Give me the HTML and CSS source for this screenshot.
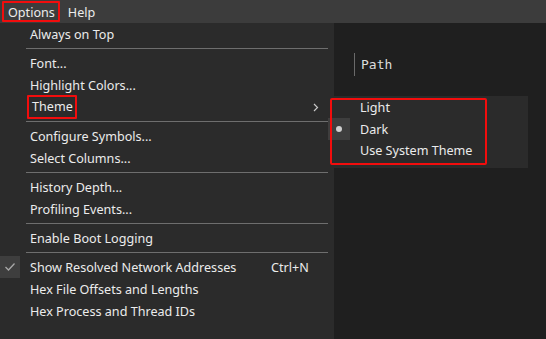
FILE: index.html
```html
<!DOCTYPE html>
<html lang="en">
<head>
    <meta charset="UTF-8">
    <title>Options</title>
    <link rel="stylesheet" href="styles.css">
</head>
<body>
    <div class="menubar">
        <div class="menubar-item marked">Options</div>
        <div class="menubar-item">Help</div>
    </div>

    <div class="workspace">
        <div class="left-pane"></div>
        <div class="right-pane">
            <div class="column-header">Path</div>
        </div>
    </div>

    <div class="dropdown">
        <div class="menu-item">Always on Top</div>
        <div class="separator"></div>
        <div class="menu-item">Font...</div>
        <div class="menu-item">Highlight Colors...</div>
        <div class="menu-item">
            <span class="label marked">Theme</span>
            <span class="chevron">
                <svg width="6" height="9" viewBox="0 0 6 9"><path d="M1 1 L4.5 4.5 L1 8" fill="none" stroke="#c8c8c8" stroke-width="1.2"/></svg>
            </span>
        </div>
        <div class="separator"></div>
        <div class="menu-item">Configure Symbols...</div>
        <div class="menu-item">Select Columns...</div>
        <div class="separator"></div>
        <div class="menu-item">History Depth...</div>
        <div class="menu-item">Profiling Events...</div>
        <div class="separator"></div>
        <div class="menu-item">Enable Boot Logging</div>
        <div class="separator"></div>
        <div class="menu-item">
            <span class="check-box">
                <svg width="12" height="10" viewBox="0 0 12 10"><path d="M1.5 5 L4.5 8 L10.5 1.5" fill="none" stroke="#a8a8a8" stroke-width="1.3"/></svg>
            </span>
            <span class="label">Show Resolved Network Addresses</span>
            <span class="shortcut">Ctrl+N</span>
        </div>
        <div class="menu-item">Hex File Offsets and Lengths</div>
        <div class="menu-item">Hex Process and Thread IDs</div>
    </div>

    <div class="submenu">
        <div class="menu-item">Light</div>
        <div class="menu-item">
            <span class="radio-box"><span class="dot"></span></span>
            Dark
        </div>
        <div class="menu-item short">Use System Theme</div>
        <div class="highlight-frame"></div>
    </div>
</body>
</html>
```

FILE: styles.css
```css
* {
    margin: 0;
    padding: 0;
    box-sizing: border-box;
}

body {
    width: 546px;
    height: 339px;
    overflow: hidden;
    background: #1f1f1f;
    color: #ececec;
    font-family: 'Noto Sans', 'Open Sans', sans-serif;
    font-size: 12.6px;
    position: relative;
}

.menubar {
    height: 23px;
    background: #3c3c3c;
    display: flex;
    align-items: center;
    padding-left: 2px;
    gap: 2px;
}

.menubar-item {
    height: 21px;
    line-height: 19px;
    padding: 0 3px 0 4px;
    border: 2px solid transparent;
}

.marked {
    border: 2px solid #f20d0d;
    border-radius: 1px;
}

.workspace {
    display: flex;
    height: 316px;
}

.left-pane {
    width: 334px;
    background: #2b2b2b;
}

.right-pane {
    flex: 1;
    padding: 30px 0 0 20px;
}

.column-header {
    border-left: 1px solid #6a6a6a;
    padding-left: 6px;
    height: 23px;
    line-height: 23px;
    font-family: 'DejaVu Sans Mono', 'Liberation Mono', monospace;
    font-size: 13px;
    color: #dcdcdc;
}

.dropdown {
    position: absolute;
    top: 23px;
    left: 0;
    width: 334px;
    height: 305px;
    background: #2b2b2b;
    padding-bottom: 6px;
}

.menu-item {
    height: 22px;
    display: flex;
    align-items: center;
    padding-left: 30px;
    position: relative;
    white-space: nowrap;
}

.menu-item .label.marked {
    margin-left: -3px;
    padding: 0 2px 0 3px;
    height: 24px;
    line-height: 20px;
}

.chevron {
    position: absolute;
    left: 313px;
    top: 7px;
    display: flex;
}

.shortcut {
    position: absolute;
    left: 271px;
}

.check-box {
    position: absolute;
    left: 0;
    top: 0;
    width: 20px;
    height: 22px;
    background: #3e3e3e;
    display: flex;
    align-items: center;
    justify-content: center;
}

.separator {
    height: 7px;
    margin: 0 6px 0 26px;
    position: relative;
}

.separator::after {
    content: '';
    position: absolute;
    left: 0;
    right: 0;
    top: 3px;
    height: 1px;
    background: #6e6e6e;
}

.submenu {
    position: absolute;
    top: 96px;
    left: 328px;
    width: 200px;
    height: 72px;
    background: #2b2b2b;
}

.submenu .menu-item {
    padding-left: 32px;
}

.submenu .menu-item.short {
    height: 21px;
}

.highlight-frame {
    position: absolute;
    top: 2px;
    left: 2px;
    width: 157px;
    height: 67px;
    border: 2px solid #f20d0d;
    border-radius: 2px;
}

.radio-box {
    position: absolute;
    left: 0;
    top: 0;
    width: 22px;
    height: 22px;
    background: #3e3e3e;
    display: flex;
    align-items: center;
    justify-content: center;
}

.dot {
    width: 6px;
    height: 6px;
    border-radius: 50%;
    background: #cfcfcf;
}
```
